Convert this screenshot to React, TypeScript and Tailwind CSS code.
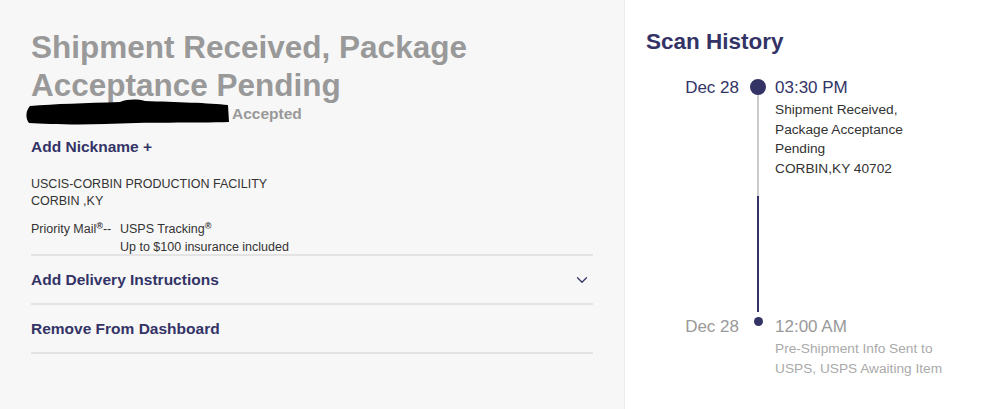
import { ChevronDown } from "lucide-react";

const navy = "text-[#333366]";

const Divider = () => <div className="h-[2px] bg-[#e3e3e3]" />;

const App = () => {
  return (
    <div className="flex h-[409px] w-[1000px] overflow-hidden font-['Liberation_Sans',Arial,sans-serif]">
      {/* left detail panel */}
      <div className="w-[624px] flex-shrink-0 bg-[#f7f7f7] pl-[31px] pr-[31px] pt-[28px]">
        <h1 className="text-[31.5px] font-bold leading-[38px] text-[#999999]">
          Shipment Received, Package
          <br />
          Acceptance Pending
        </h1>
        <div className="mt-[-4px] flex h-[24px] items-center">
          <svg width="206" height="28" viewBox="0 0 206 28" className="ml-[-6px] mt-[-1px]">
            <path
              d="M5 8 C 30 6, 60 5, 95 4 C 103 1, 112 1, 120 3 C 150 4, 185 5, 203 7 L 204 24 C 170 25, 120 24, 80 26 C 50 27, 20 26, 4 25 C 0 20, 1 12, 5 8 Z"
              fill="#000"
            />
          </svg>
          <span className="ml-[1px] mt-[3px] text-[15.5px] font-bold text-[#999999]">Accepted</span>
        </div>
        <div className={`mt-[11px] text-[15.5px] font-bold ${navy}`}>Add Nickname +</div>
        <div className="mt-[18px] text-[12.5px] leading-[17px] text-[#333333]">
          <div>USCIS-CORBIN PRODUCTION FACILITY</div>
          <div>CORBIN ,KY</div>
        </div>
        <div className="mt-[10px] flex text-[12.5px] leading-[18px] text-[#333333]">
          <div className="w-[89px]">
            Priority Mail<sup className="text-[9px] font-bold">®</sup>--
          </div>
          <div>
            <div>
              USPS Tracking<sup className="text-[9px] font-bold">®</sup>
            </div>
            <div>Up to $100 insurance included</div>
          </div>
        </div>
        <div className="mt-[-2px]">
          <Divider />
        </div>
        <div className="flex h-[47px] items-center justify-between pr-[2px]">
          <span className={`text-[15.5px] font-bold ${navy}`}>Add Delivery Instructions</span>
          <ChevronDown size={18} strokeWidth={1.6} className="text-[#333366]" />
        </div>
        <Divider />
        <div className="flex h-[47px] items-center">
          <span className={`text-[15.5px] font-bold ${navy}`}>Remove From Dashboard</span>
        </div>
        <Divider />
      </div>

      <div className="w-px bg-[#ececec]" />

      {/* scan history */}
      <div className="flex-1 bg-white pl-[21px] pt-[27px]">
        <h2 className={`text-[22.5px] font-bold leading-[30px] ${navy}`}>Scan History</h2>
        <div className="mt-[21px] flex">
          <div className="flex w-[93px] flex-col items-end">
            <div className={`text-[17px] leading-[20px] ${navy}`}>Dec 28</div>
            <div className="mt-[219px] text-[17px] leading-[20px] text-[#999999]">Dec 28</div>
          </div>
          <div className="ml-[11px] flex w-[16px] flex-col items-center pt-[1px]">
            <div className="h-[16px] w-[16px] rounded-full bg-[#333366]" />
            <div className="h-[101px] w-[2px] bg-[#cccccc]" />
            <div className="h-[116px] w-[2px] bg-[#333366]" />
            <div className="mt-[5px] h-[9px] w-[9px] rounded-full bg-[#333366]" />
          </div>
          <div className="ml-[9px] flex flex-col">
            <div className={`text-[17px] leading-[20px] ${navy}`}>03:30 PM</div>
            <div className="mt-[2px] text-[13.7px] leading-[19.5px] text-[#333333]">
              <div>Shipment Received,</div>
              <div>Package Acceptance</div>
              <div>Pending</div>
              <div>CORBIN,KY 40702</div>
            </div>
            <div className="mt-[139px] text-[17px] leading-[20px] text-[#999999]">12:00 AM</div>
            <div className="mt-[2px] text-[13.7px] leading-[19.5px] text-[#aaaaaa]">
              <div>Pre-Shipment Info Sent to</div>
              <div>USPS, USPS Awaiting Item</div>
            </div>
          </div>
        </div>
      </div>
    </div>
  );
};

export default App;
